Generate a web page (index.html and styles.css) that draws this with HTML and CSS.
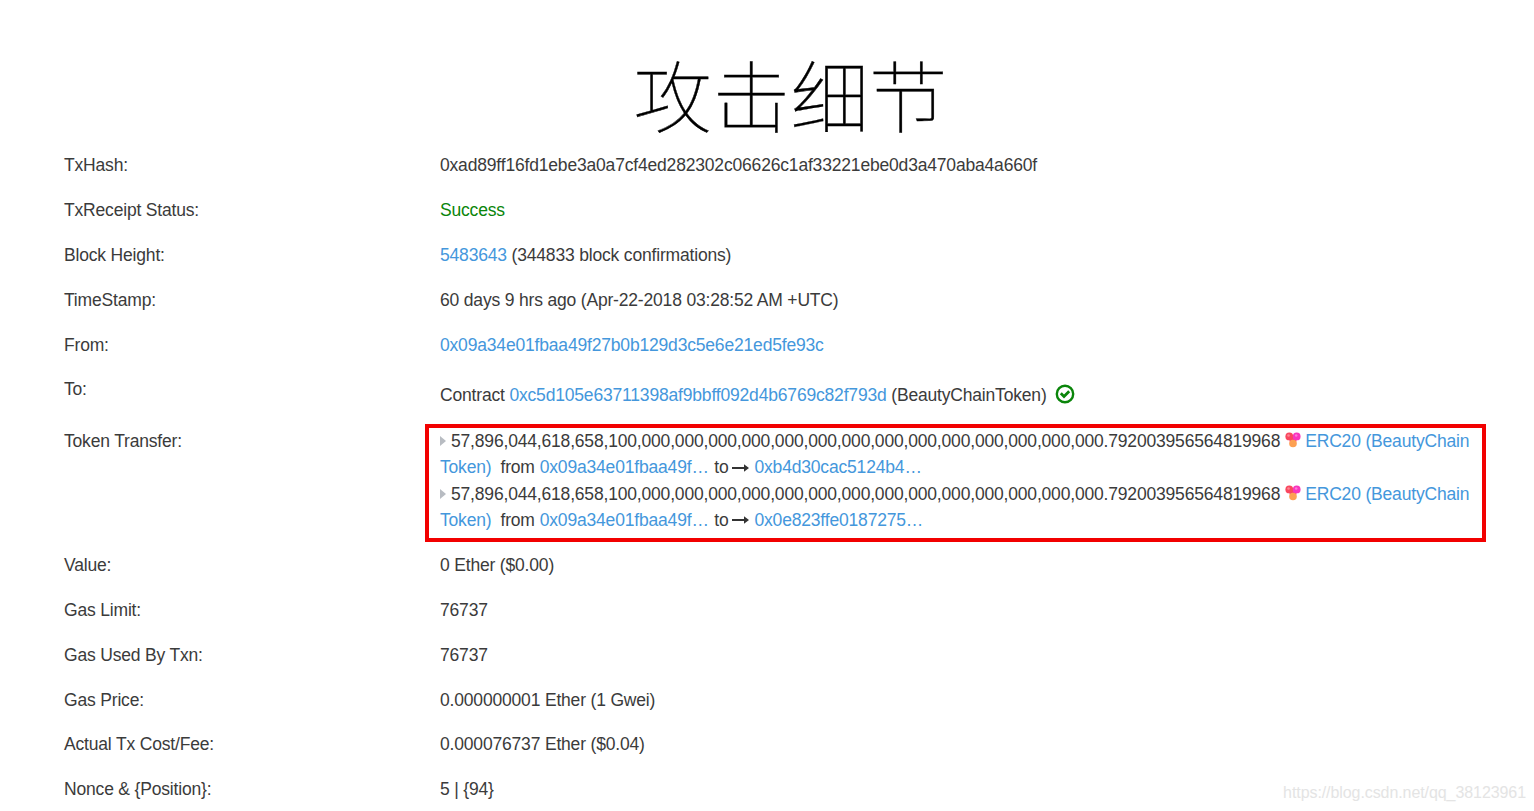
FILE: index.html
```html
<!DOCTYPE html>
<html lang="zh-CN">
<head>
    <meta charset="UTF-8">
    <meta name="viewport" content="width=device-width, initial-scale=1.0">
    <title>攻击细节</title>
    <link rel="stylesheet" href="styles.css">
</head>
<body>
    <svg class="defs" width="0" height="0">
        <defs>
            <symbol id="bec" viewBox="0 0 16 16">
                <path d="M4 6h8l-1 5H5z" fill="#f7407f"/>
                <circle cx="4.3" cy="4.4" r="3.9" fill="#f9475f"/>
                <circle cx="11.7" cy="4.4" r="3.9" fill="#f935bd"/>
                <circle cx="8" cy="11.5" r="3.8" fill="#fda052"/>
                <circle cx="3.5" cy="3.5" r="1.3" fill="#fc8792"/>
                <circle cx="11.2" cy="3.5" r="1.3" fill="#fd7ad8"/>
            </symbol>
            <symbol id="arrow" viewBox="0 0 17 10">
                <path d="M0 4h12V1.2L17 5l-5 3.8V6H0z" fill="#333"/>
            </symbol>
        </defs>
    </svg>

    <h1>攻击细节</h1>

    <dl class="tx">
        <div class="row">
            <dt>TxHash:</dt>
            <dd>0xad89ff16fd1ebe3a0a7cf4ed282302c06626c1af33221ebe0d3a470aba4a660f</dd>
        </div>
        <div class="row">
            <dt>TxReceipt Status:</dt>
            <dd class="success">Success</dd>
        </div>
        <div class="row">
            <dt>Block Height:</dt>
            <dd><a>5483643</a> (344833 block confirmations)</dd>
        </div>
        <div class="row">
            <dt>TimeStamp:</dt>
            <dd>60 days 9 hrs ago (Apr-22-2018 03:28:52 AM +UTC)</dd>
        </div>
        <div class="row">
            <dt>From:</dt>
            <dd><a>0x09a34e01fbaa49f27b0b129d3c5e6e21ed5fe93c</a></dd>
        </div>
        <div class="row row-to">
            <dt>To:</dt>
            <dd>Contract <a>0xc5d105e63711398af9bbff092d4b6769c82f793d</a> (BeautyChainToken)
                <svg class="check" viewBox="0 0 20 20">
                    <circle cx="10" cy="10" r="8.2" fill="none" stroke="#0a850a" stroke-width="2.4"/>
                    <path d="M5.8 9.3l3.2 3.2 5.2-5.2" fill="none" stroke="#0a850a" stroke-width="2.8"/>
                </svg>
            </dd>
        </div>
        <div class="row">
            <dt>Token Transfer:</dt>
            <dd class="transfers">
                <div class="line"><i class="caret"></i>57,896,044,618,658,100,000,000,000,000,000,000,000,000,000,000,000,000,000,000.792003956564819968<svg class="bec"><use href="#bec"/></svg><a>ERC20 (BeautyChain</a></div>
                <div class="line"><a>Token)</a><span class="from">from</span> <a>0x09a34e01fbaa49f…</a><span class="to">to</span><svg class="arrow"><use href="#arrow"/></svg><a>0xb4d30cac5124b4…</a></div>
                <div class="line"><i class="caret"></i>57,896,044,618,658,100,000,000,000,000,000,000,000,000,000,000,000,000,000,000.792003956564819968<svg class="bec"><use href="#bec"/></svg><a>ERC20 (BeautyChain</a></div>
                <div class="line"><a>Token)</a><span class="from">from</span> <a>0x09a34e01fbaa49f…</a><span class="to">to</span><svg class="arrow"><use href="#arrow"/></svg><a>0x0e823ffe0187275…</a></div>
            </dd>
        </div>
        <div class="row">
            <dt>Value:</dt>
            <dd>0 Ether ($0.00)</dd>
        </div>
        <div class="row">
            <dt>Gas Limit:</dt>
            <dd>76737</dd>
        </div>
        <div class="row">
            <dt>Gas Used By Txn:</dt>
            <dd>76737</dd>
        </div>
        <div class="row">
            <dt>Gas Price:</dt>
            <dd>0.000000001 Ether (1 Gwei)</dd>
        </div>
        <div class="row">
            <dt>Actual Tx Cost/Fee:</dt>
            <dd>0.000076737 Ether ($0.04)</dd>
        </div>
        <div class="row">
            <dt>Nonce &amp; {Position}:</dt>
            <dd>5 | {94}</dd>
        </div>
    </dl>

    <div class="watermark">https://blog.csdn.net/qq_38123961</div>
</body>
</html>
```
FILE: styles.css
```css
body {
    margin: 0;
    height: 811px;
    overflow: hidden;
    position: relative;
    background: #fff;
    color: #3b3b3b;
    font-family: "Liberation Sans", Arial, sans-serif;
    font-size: 17.5px;
    line-height: 26.4px;
    letter-spacing: -0.18px;
}
.defs { position: absolute; }
h1 {
    margin: 0;
    padding: 47px 0 0 47px;
    height: 96px;
    line-height: 92px;
    text-align: center;
    font-family: "Noto Sans CJK SC", sans-serif;
    font-weight: 100;
    font-size: 78.5px;
    letter-spacing: 0;
    color: #000;
    -webkit-text-stroke: 0.4px #000;
}
.tx { margin: 0 0 0 64px; }
.row {
    display: flex;
    padding: 9.22px 0;
}
dt { width: 376px; flex: none; }
dd { margin: 0; white-space: nowrap; }
a { color: #4497dc; }
.success { color: #0a850a; }
.row-to { padding-bottom: 10.6px; }
.row-to dd { margin-top: 5.4px; }
.check {
    width: 20px;
    height: 20px;
    margin-left: 4px;
    vertical-align: -3px;
}
.transfers { position: relative; }
/* red highlight around both transfers */
.transfers::after {
    content: "";
    position: absolute;
    top: -4px;
    left: -15px;
    width: 1053px;
    height: 110px;
    border: 4px solid #f20000;
}
.line { display: flex; align-items: center; height: 26.4px; }
.caret {
    border: 5px solid transparent;
    border-left: 6px solid #b8bcc2;
    border-right: 0;
    margin-right: 5px;
}
.bec { width: 16px; height: 16px; margin: -2px 4px 0 5px; }
.arrow { width: 17px; height: 10px; margin: 0 5px 0 4px; }
.from { margin: 0 5px 0 9px; }
.to { margin-left: 5.5px; }
.watermark {
    position: absolute;
    right: 8px;
    bottom: 5px;
    font-size: 16px;
    letter-spacing: -0.08px;
    color: #e4e4e4;
}
```
